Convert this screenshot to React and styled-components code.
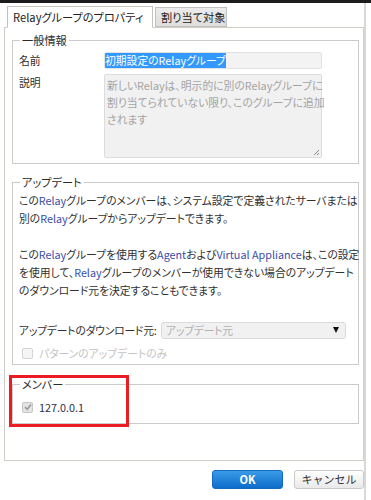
import React from 'react'
import styled, { createGlobalStyle } from 'styled-components'

const Global = createGlobalStyle`
    html, body {
        margin: 0;
        padding: 0;
        background: #fff;
    }
    body {
        font-family: 'Noto Sans CJK JP', 'Liberation Sans', sans-serif;
        font-size: 10.8px;
        color: #303030;
        font-feature-settings: 'palt';
    }
`

const Page = styled.div`
    width: 371px;
    height: 500px;
    overflow: hidden;
`

const TopBar = styled.div`
    height: 3px;
    background: #1c1c1c;
`

const Window = styled.div`
    width: 366px;
    height: 497px;
    border-right: 2px solid #d9d9d3;
    box-sizing: border-box;
    padding-top: 3px;
`

const TabStrip = styled.div`
    display: flex;
    align-items: flex-end;
    gap: 2px;
    margin-left: 7px;
    height: 21px;
    position: relative;
    z-index: 1;
`

const Tab = styled.div`
    width: ${p => p.$width}px;
    box-sizing: border-box;
    height: ${p => (p.$active ? '22px' : '20px')};
    padding: 0 5px;
    display: flex;
    align-items: center;
    border: 1px solid ${p => (p.$active ? '#c4c2bb' : '#c0c0c0')};
    border-bottom: 1px solid ${p => (p.$active ? '#fff' : '#c4c2bb')};
    background: ${p => (p.$active ? '#fff' : 'linear-gradient(#ececec, #dedede)')};
    color: #222;
    font-size: 11.2px;
    white-space: nowrap;
    margin-bottom: ${p => (p.$active ? '-1px' : '0')};
`

const Panel = styled.div`
    margin-left: 4px;
    width: 360px;
    height: 434px;
    box-sizing: border-box;
    border: 1px solid #cfcdc6;
    padding: 5px 4px 0 7px;
`

const Group = styled.fieldset`
    margin: ${p => p.$gap || 0}px 0 0;
    padding: 0 6px ${p => p.$bottom || 4}px;
    border: 1px solid #cbcbcb;
    min-width: 0;
`

const Legend = styled.legend`
    padding: 0 2px;
    margin-left: 1px;
    font-size: 11.2px;
    line-height: 14px;
    color: #2b2b2b;
`

const FormGrid = styled.div`
    display: grid;
    grid-template-columns: 85px 218px;
    row-gap: 5px;
    margin-top: 5px;
`

const Label = styled.div`
    line-height: 17px;
`

const Field = styled.div`
    height: 17px;
    box-sizing: border-box;
    border: 1px solid #e2e2e2;
    border-radius: 2px;
    background: #f3f3f3;
    line-height: 15px;
    white-space: nowrap;
    overflow: hidden;
`

const Selected = styled.span`
    background: #3399ff;
    color: #fff;
`

const Area = styled.div`
    position: relative;
    height: 84px;
    box-sizing: border-box;
    border: 1px solid #dcdcdc;
    border-radius: 2px;
    background: #f1f1f1;
    color: #a4a4a4;
    padding: 2px 2px;
    line-height: 17px;
    white-space: nowrap;
`

const Grip = styled.svg`
    position: absolute;
    right: 1px;
    bottom: 1px;
`

const Para = styled.p`
    margin: ${p => p.$top || 0}px 0 0;
    line-height: 18px;
    white-space: nowrap;
`

const Hi = styled.span`
    color: #3a4ea8;
`

const SelectRow = styled.div`
    display: flex;
    align-items: center;
    justify-content: space-between;
    margin-top: 22px;
    height: 18px;
    white-space: nowrap;
    letter-spacing: -0.2px;
`

const Select = styled.div`
    width: 185px;
    height: 17px;
    box-sizing: border-box;
    border: 1px solid #dadada;
    border-radius: 3px;
    background: #f1f1f1;
    color: #b0b0b0;
    display: flex;
    align-items: center;
    justify-content: space-between;
    padding: 0 6px 0 4px;
    margin-right: 6px;
`

const Arrow = styled.span`
    width: 0;
    height: 0;
    border-left: 3.5px solid transparent;
    border-right: 3.5px solid transparent;
    border-top: 6px solid #111;
`

const CheckRow = styled.div`
    display: flex;
    align-items: center;
    gap: 6px;
    margin-top: ${p => p.$top || 0}px;
    margin-left: 3px;
    height: 16px;
    color: ${p => (p.$muted ? '#c4c4c4' : '#2d2d55')};
`

const Box = styled.span`
    width: 11px;
    height: 11px;
    box-sizing: border-box;
    border: 1px solid ${p => (p.$checked ? '#c6c6c6' : '#d4d4d4')};
    border-radius: 2px;
    background: ${p => (p.$checked ? '#e4e4e4' : '#f5f5f5')};
    display: flex;
    align-items: center;
    justify-content: center;
`

const Annotated = styled.div`
    position: relative;
`

const RedFrame = styled.div`
    position: absolute;
    left: -3px;
    top: -2px;
    width: 120px;
    height: 52px;
    box-sizing: border-box;
    border: 3px solid #ec1c24;
    pointer-events: none;
`

const Footer = styled.div`
    display: flex;
    justify-content: flex-end;
    gap: 11px;
    margin-top: 9px;
    width: 364px;
`

const Button = styled.button`
    width: ${p => (p.$primary ? '71px' : '70px')};
    height: 19px;
    box-sizing: border-box;
    border-radius: 3px;
    font-family: 'Noto Sans CJK JP', 'Liberation Sans', sans-serif;
    font-size: 11px;
    line-height: 15px;
    padding: 0;
    border: 1px solid ${p => (p.$primary ? '#1469c2' : '#c9c9c9')};
    background: ${p => (p.$primary ? 'linear-gradient(#3a9be6, #0c6ccb)' : 'linear-gradient(#ffffff, #e9e9e9)')};
    color: ${p => (p.$primary ? '#fff' : '#333')};
    font-weight: ${p => (p.$primary ? 600 : 400)};
`

function App() {
    return (
        <Page>
            <Global />
            <TopBar />
            <Window>
                <TabStrip>
                    <Tab $active $width={146}>Relayグループのプロパティ</Tab>
                    <Tab $width={72}>割り当て対象</Tab>
                </TabStrip>
                <Panel>
                    <Group $bottom={5}>
                        <Legend>一般情報</Legend>
                        <FormGrid>
                            <Label>名前</Label>
                            <Field><Selected>初期設定のRelayグループ</Selected></Field>
                            <Label>説明</Label>
                            <Area>
                                新しいRelayは、明示的に別のRelayグループに<br />
                                割り当てられていない限り、このグループに追加<br />
                                されます
                                <Grip width="7" height="7" viewBox="0 0 7 7">
                                    <path d="M6 1L1 6M6 4L4 6" stroke="#8a8a8a" strokeWidth="1" />
                                </Grip>
                            </Area>
                        </FormGrid>
                    </Group>

                    <Group $gap={11} $bottom={3}>
                        <Legend>アップデート</Legend>
                        <Para $top={2}>
                            この<Hi>Relay</Hi>グループのメンバーは、システム設定で定義されたサーバまたは<br />
                            別の<Hi>Relay</Hi>グループからアップデートできます。
                        </Para>
                        <Para $top={18}>
                            この<Hi>Relay</Hi>グループを使用する<Hi>Agent</Hi>および<Hi>Virtual Appliance</Hi>は、この設定<br />
                            を使用して、<Hi>Relay</Hi>グループのメンバーが使用できない場合のアップデート<br />
                            のダウンロード元を決定することもできます。
                        </Para>
                        <SelectRow>
                            <span>アップデートのダウンロード元:</span>
                            <Select>
                                <span>アップデート元</span>
                                <Arrow />
                            </Select>
                        </SelectRow>
                        <CheckRow $top={6} $muted>
                            <Box />
                            <span>パターンのアップデートのみ</span>
                        </CheckRow>
                    </Group>

                    <Annotated>
                        <Group $gap={12} $bottom={8}>
                            <Legend>メンバー</Legend>
                            <CheckRow $top={8}>
                                <Box $checked>
                                    <svg width="8" height="8" viewBox="0 0 8 8">
                                        <path d="M1 4.2L3.2 6.3L7 1.5" stroke="#9a9a9a" strokeWidth="1.6" fill="none" />
                                    </svg>
                                </Box>
                                <span>127.0.0.1</span>
                            </CheckRow>
                        </Group>
                        <RedFrame />
                    </Annotated>
                </Panel>
                <Footer>
                    <Button $primary>OK</Button>
                    <Button>キャンセル</Button>
                </Footer>
            </Window>
        </Page>
    )
}

export default App
